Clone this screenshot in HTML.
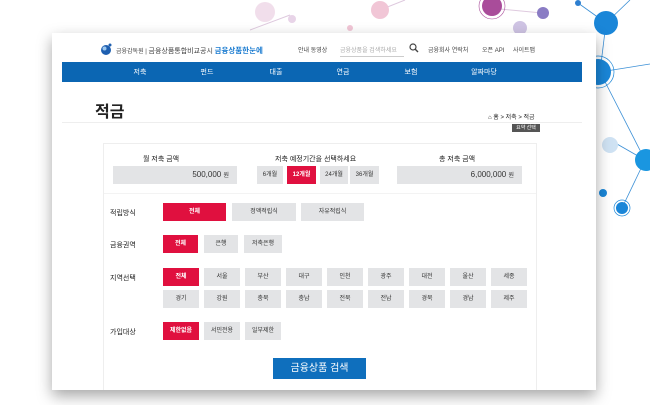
<!DOCTYPE html>
<html><head><meta charset="utf-8"><style>
*{margin:0;padding:0;box-sizing:border-box}
body{width:650px;height:405px;overflow:hidden;background:#fff;position:relative;font-family:"Liberation Sans","Noto Sans CJK KR",sans-serif;color:#333}
.abs{position:absolute}
#card{position:absolute;left:52px;top:33px;width:544px;height:357px;background:#fff;box-shadow:0 6px 14px rgba(0,0,0,.35);overflow:hidden}
.t{position:absolute;font-size:6px;color:#444;white-space:nowrap}
.nav{position:absolute;left:10px;top:29px;width:520px;height:20px;background:#0b66b3}
.nav span{position:absolute;top:5px;font-size:7px;color:#fff;transform:translateX(-50%)}
.b{position:absolute;height:18px;background:#e3e4e6;font-size:6px;color:#333;text-align:center;line-height:18px}
.r{background:#e0103f;color:#fff;font-weight:bold}
.lab{position:absolute;font-size:7px;color:#222}
</style></head><body>
<svg class="abs" style="left:0;top:0" width="650" height="405">
<g stroke="#c9a6c9" stroke-width="1" fill="none" opacity=".6">
<line x1="380" y1="10" x2="405" y2="0"/><line x1="490" y1="8" x2="542" y2="13"/><line x1="250" y1="30" x2="290" y2="15"/>
</g>
<circle cx="265" cy="12" r="10" fill="#e8c8de" opacity=".6"/>
<circle cx="292" cy="19" r="4" fill="#d9b8d8" opacity=".6"/>
<circle cx="380" cy="10" r="9" fill="#f1c6d6"/>
<circle cx="350" cy="28" r="3" fill="#f1c6d6"/>
<circle cx="492" cy="6" r="10" fill="#a94c9a"/><circle cx="492" cy="6" r="13" fill="none" stroke="#a94c9a" stroke-width=".6"/>
<circle cx="543" cy="13" r="6" fill="#8a7cc4"/>
<circle cx="520" cy="28" r="7" fill="#cfc4e4"/>
<g stroke="#3a8fd6" stroke-width=".8" fill="none">
<line x1="578" y1="3" x2="606" y2="23"/><line x1="606" y1="23" x2="600" y2="72"/><line x1="600" y1="72" x2="645" y2="160"/><line x1="600" y1="72" x2="650" y2="64"/><line x1="645" y1="160" x2="622" y2="208"/><line x1="630" y1="0" x2="606" y2="23"/><line x1="645" y1="160" x2="610" y2="140"/>
</g>
<circle cx="578" cy="3" r="3" fill="#2d7fd0"/>
<circle cx="606" cy="23" r="12" fill="#1a86d8"/>
<circle cx="598" cy="72" r="13" fill="#1a86d8"/><circle cx="598" cy="72" r="16" fill="none" stroke="#1a86d8" stroke-width=".7"/>
<circle cx="646" cy="160" r="11" fill="#1a96e0"/>
<circle cx="610" cy="145" r="8" fill="#cfe2f3"/>
<circle cx="603" cy="193" r="4" fill="#1a86d8"/>
<circle cx="622" cy="208" r="6" fill="#1a86d8"/><circle cx="622" cy="208" r="8" fill="none" stroke="#1a86d8" stroke-width=".7"/>
</svg>
<div id="card">
<svg class="abs" style="left:48px;top:10px" width="12" height="12"><circle cx="6" cy="7" r="5" fill="#1e5fb0"/><circle cx="4.5" cy="5.5" r="2" fill="#9cc8f0"/><circle cx="10" cy="2" r="1.5" fill="#1e5fb0"/></svg>
<div class="t" style="left:64px;top:12px;font-size:6px">금융감독원 | <span style="font-size:7px;color:#444">금융상품통합비교공시</span> <b style="font-size:7.5px;color:#1a7bd0">금융상품한눈에</b></div>
<div class="t" style="left:246px;top:12px">안내 동영상</div>
<div class="t" style="left:288px;top:12px;color:#aaa;border-bottom:1px solid #ccc;width:64px;padding-bottom:2px">금융상품을 검색하세요</div>
<svg class="abs" style="left:357px;top:10px" width="10" height="10"><circle cx="4" cy="4" r="3" fill="none" stroke="#444" stroke-width="1.2"/><line x1="6" y1="6" x2="9" y2="9" stroke="#444" stroke-width="1.4"/></svg>
<div class="t" style="left:376px;top:12px">금융회사 연락처</div>
<div class="t" style="left:430px;top:12px">오픈 API</div>
<div class="t" style="left:461px;top:12px">사이트맵</div>
<div class="nav"><span style="left:78px">저축</span><span style="left:145px">펀드</span><span style="left:214px">대출</span><span style="left:281px">연금</span><span style="left:349px">보험</span><span style="left:422px">알짜마당</span></div>
<div class="abs" style="left:43px;top:65px;font-size:16px;font-weight:bold;color:#222">적금</div>
<div class="t" style="left:436px;top:79px;color:#222">⌂ 홈 &gt; 저축 &gt; 적금</div>
<div class="abs" style="left:10px;top:89px;width:520px;height:1px;background:#eee"></div>
<div class="abs" style="left:460px;top:91px;width:28px;height:8px;background:#555;color:#fff;font-size:5px;text-align:center;line-height:8px">요약 선택</div>
<div class="abs" style="left:51px;top:110px;width:434px;height:270px;border:1px solid #eee"></div>
<div class="lab" style="left:91px;top:121px">월 저축 금액</div>
<div class="b" style="left:61px;top:133px;width:124px;text-align:right;padding-right:8px;font-size:8px">500,000 <span style="font-size:6px">원</span></div>
<div class="lab" style="left:223px;top:121px">저축 예정기간을 선택하세요</div>
<div class="b" style="left:205px;top:133px;width:26px">6개월</div>
<div class="b r" style="left:235px;top:133px;width:29px">12개월</div>
<div class="b" style="left:268px;top:133px;width:28px">24개월</div>
<div class="b" style="left:298px;top:133px;width:29px">36개월</div>
<div class="lab" style="left:387px;top:121px">총 저축 금액</div>
<div class="b" style="left:345px;top:133px;width:125px;text-align:right;padding-right:8px;font-size:8px">6,000,000 <span style="font-size:6px">원</span></div>
<div class="abs" style="left:52px;top:160px;width:432px;height:1px;background:#f3f3f3"></div>
<div class="lab" style="left:58px;top:175px">적립방식</div>
<div class="b r" style="left:111px;top:170px;width:63px">전체</div>
<div class="b" style="left:180px;top:170px;width:64px">정액적립식</div>
<div class="b" style="left:249px;top:170px;width:63px">자유적립식</div>
<div class="lab" style="left:58px;top:207px">금융권역</div>
<div class="b r" style="left:111px;top:202px;width:35px">전체</div>
<div class="b" style="left:152px;top:202px;width:34px">은행</div>
<div class="b" style="left:192px;top:202px;width:38px">저축은행</div>
<div class="lab" style="left:58px;top:240px">지역선택</div>
<div class="b r" style="left:111px;top:235px;width:36px">전체</div>
<div class="b" style="left:152px;top:235px;width:36px">서울</div>
<div class="b" style="left:193px;top:235px;width:36px">부산</div>
<div class="b" style="left:234px;top:235px;width:36px">대구</div>
<div class="b" style="left:275px;top:235px;width:36px">인천</div>
<div class="b" style="left:316px;top:235px;width:36px">광주</div>
<div class="b" style="left:357px;top:235px;width:36px">대전</div>
<div class="b" style="left:398px;top:235px;width:36px">울산</div>
<div class="b" style="left:439px;top:235px;width:36px">세종</div>
<div class="b" style="left:111px;top:257px;width:36px">경기</div>
<div class="b" style="left:152px;top:257px;width:36px">강원</div>
<div class="b" style="left:193px;top:257px;width:36px">충북</div>
<div class="b" style="left:234px;top:257px;width:36px">충남</div>
<div class="b" style="left:275px;top:257px;width:36px">전북</div>
<div class="b" style="left:316px;top:257px;width:36px">전남</div>
<div class="b" style="left:357px;top:257px;width:36px">경북</div>
<div class="b" style="left:398px;top:257px;width:36px">경남</div>
<div class="b" style="left:439px;top:257px;width:36px">제주</div>
<div class="lab" style="left:58px;top:294px">가입대상</div>
<div class="b r" style="left:111px;top:289px;width:36px">제한없음</div>
<div class="b" style="left:152px;top:289px;width:36px">서민전용</div>
<div class="b" style="left:193px;top:289px;width:36px">일부제한</div>
<div class="abs" style="left:221px;top:325px;width:93px;height:21px;background:#0f6fbd;color:#fff;font-size:10px;text-align:center;line-height:21px">금융상품 검색</div>
</div>
</body></html>
